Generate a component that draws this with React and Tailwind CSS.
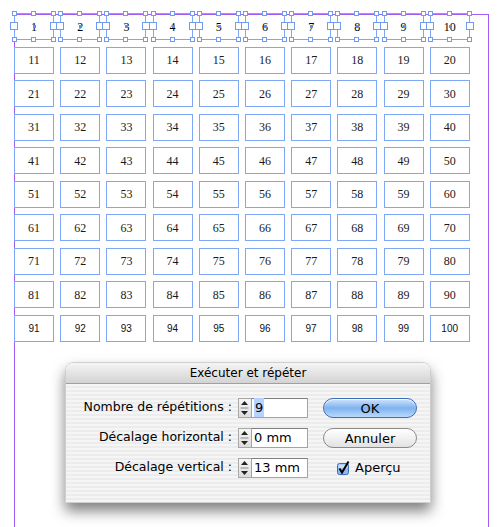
const cells = Array.from({ length: 100 }, (_, i) => i + 1);

const Handle = ({ className }) => (
  <span className={`absolute bg-white border border-[#6f9cf2] ${className}`} />
);

const Cell = ({ n }) => {
  const selected = n <= 10;
  const last = n > 90;
  return (
    <div
      className={`relative w-[40px] h-[27px] border border-[#7ea7f7] flex items-center justify-center
        ${last ? "font-['Liberation_Sans',sans-serif] text-[10px] text-[#111]" : "font-['Liberation_Serif',serif] text-[12px] text-[#1a1a1a]"}`}
    >
      <span className={selected ? "text-black" : ""}>{n}</span>
      {selected && (
        <>
          <span className="absolute left-[18px] top-[11px] w-[3px] h-[3px] bg-[#5a8ef0]" />
          <Handle className="w-[5px] h-[5px] -left-[3px] -top-[3px]" />
          <Handle className="w-[5px] h-[5px] left-[16px] -top-[3px]" />
          <Handle className="w-[5px] h-[5px] -right-[3px] -top-[3px]" />
          <Handle className="w-[5px] h-[5px] -left-[3px] -bottom-[3px]" />
          <Handle className="w-[5px] h-[5px] left-[16px] -bottom-[3px]" />
          <Handle className="w-[5px] h-[5px] -right-[3px] -bottom-[3px]" />
          <Handle className="w-[8px] h-[8px] -left-[5px] top-[8px]" />
          <Handle className="w-[8px] h-[8px] -right-[5px] top-[8px]" />
        </>
      )}
    </div>
  );
};

const Stepper = () => (
  <div className="w-[13px] h-[20px] bg-gradient-to-b from-[#f6f6f6] to-[#dcdcdc] border border-[#a8a8a8] border-r-0">
    <svg width="11" height="18" viewBox="0 0 11 18">
      <polygon points="2,6 9,6 5.5,2" fill="#222" />
      <line x1="1.5" y1="9" x2="9.5" y2="9" stroke="#888" strokeWidth="1" />
      <polygon points="2,12 9,12 5.5,16" fill="#222" />
    </svg>
  </div>
);

const Field = ({ value, highlight }) => (
  <div className="w-[57px] h-[20px] bg-white border border-[#a3a3a3] border-t-[#808080] flex items-center pl-[2px] text-[13px] text-black">
    {highlight ? <span className="bg-[#b4d4fd] px-[1px]">{value}</span> : value}
  </div>
);

const Row = ({ label, value, highlight, children }) => (
  <div className="flex items-center h-[20px]">
    <div className="w-[172px] pr-[6px] text-right text-[12.5px] text-black whitespace-nowrap">{label}</div>
    <Stepper />
    <Field value={value} highlight={highlight} />
    <div className="w-[15px]" />
    <div className="w-[94px] flex items-center">{children}</div>
  </div>
);

export default function App() {
  return (
    <div className="relative w-[504px] h-[527px] bg-white overflow-hidden font-['DejaVu_Sans',sans-serif]">
      {/* margin guides */}
      <div className="absolute left-[14px] top-[14px] w-[475px] h-[520px] border-l border-t border-r border-[#a05cf6]" />

      <div className="relative pl-[14px] pt-[13px] grid grid-cols-[repeat(10,40px)] gap-x-[6.2px] gap-y-[6.5px] w-max">
        {cells.map((n) => (
          <Cell key={n} n={n} />
        ))}
      </div>

      {/* Exécuter et répéter */}
      <div className="relative ml-[65px] mt-[20px] w-[366px] h-[141px] rounded-t-[8px] rounded-b-[2px] shadow-[0_8px_14px_rgba(0,0,0,0.5)] overflow-hidden border border-[#cfcfcf]">
        <div className="h-[21px] bg-gradient-to-b from-[#f5f5f5] to-[#d3d3d3] border-b border-[#a0a0a0] flex items-center justify-center text-[12px] text-black">
          Exécuter et répéter
        </div>
        <div className="h-[120px] pt-[14px] flex flex-col gap-[10px] bg-[repeating-linear-gradient(0deg,#ececec_0px,#ececec_2px,#f5f5f5_2px,#f5f5f5_4px)]">
          <Row label="Nombre de répétitions :" value="9" highlight>
            <button className="w-[94px] h-[20px] rounded-full border border-[#3f6db8] bg-gradient-to-b from-[#cfe3fb] via-[#7fb2f0] to-[#b7dafc] text-[13px] text-black shadow-[inset_0_1px_1px_rgba(255,255,255,0.8)]">
              OK
            </button>
          </Row>
          <Row label="Décalage horizontal :" value="0 mm">
            <button className="w-[94px] h-[20px] rounded-full border border-[#8a8a8a] bg-gradient-to-b from-[#ffffff] via-[#f1f1f1] to-[#e2e2e2] text-[13px] text-black">
              Annuler
            </button>
          </Row>
          <Row label="Décalage vertical :" value="13 mm">
            <div className="pl-[14px] flex items-center gap-[4px]">
              <svg width="14" height="14" viewBox="0 0 14 14">
                <rect x="0.5" y="2.5" width="11" height="11" rx="2" fill="#8ab8f2" stroke="#3f6db8" />
                <rect x="1.5" y="3.5" width="9" height="4" rx="1" fill="#c9e0fb" />
                <path d="M2.5 7.5 L5 11.5 L11.5 0.5" fill="none" stroke="#000" strokeWidth="2" />
              </svg>
              <span className="text-[13px] text-black">Aperçu</span>
            </div>
          </Row>
        </div>
      </div>
    </div>
  );
}
